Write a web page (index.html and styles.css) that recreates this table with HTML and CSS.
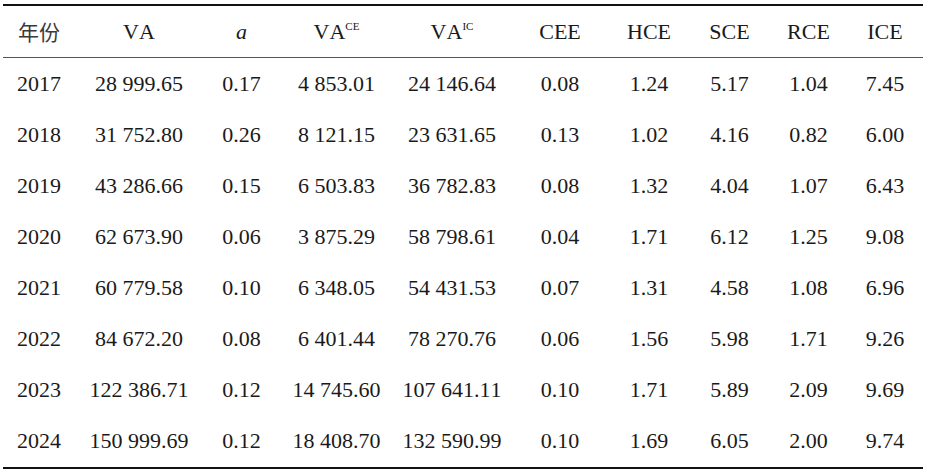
FILE: index.html
```html
<!DOCTYPE html>
<html lang="zh">
<head>
<meta charset="utf-8">
<title>表</title>
<link rel="stylesheet" href="styles.css">
</head>
<body>
<table class="data">
  <colgroup>
    <col class="c1"><col class="c2"><col class="c3"><col class="c4"><col class="c5">
    <col class="c6"><col class="c7"><col class="c8"><col class="c9"><col class="c10">
  </colgroup>
  <thead>
    <tr>
      <th class="cjk">年份</th>
      <th>VA</th>
      <th><i class="var">a</i></th>
      <th>VA<sup class="sup">CE</sup></th>
      <th>VA<sup class="sup">IC</sup></th>
      <th>CEE</th>
      <th>HCE</th>
      <th>SCE</th>
      <th>RCE</th>
      <th>ICE</th>
    </tr>
  </thead>
  <tbody>
    <tr><td>2017</td><td>28 999.65</td><td>0.17</td><td>4 853.01</td><td>24 146.64</td><td>0.08</td><td>1.24</td><td>5.17</td><td>1.04</td><td>7.45</td></tr>
    <tr><td>2018</td><td>31 752.80</td><td>0.26</td><td>8 121.15</td><td>23 631.65</td><td>0.13</td><td>1.02</td><td>4.16</td><td>0.82</td><td>6.00</td></tr>
    <tr><td>2019</td><td>43 286.66</td><td>0.15</td><td>6 503.83</td><td>36 782.83</td><td>0.08</td><td>1.32</td><td>4.04</td><td>1.07</td><td>6.43</td></tr>
    <tr><td>2020</td><td>62 673.90</td><td>0.06</td><td>3 875.29</td><td>58 798.61</td><td>0.04</td><td>1.71</td><td>6.12</td><td>1.25</td><td>9.08</td></tr>
    <tr><td>2021</td><td>60 779.58</td><td>0.10</td><td>6 348.05</td><td>54 431.53</td><td>0.07</td><td>1.31</td><td>4.58</td><td>1.08</td><td>6.96</td></tr>
    <tr><td>2022</td><td>84 672.20</td><td>0.08</td><td>6 401.44</td><td>78 270.76</td><td>0.06</td><td>1.56</td><td>5.98</td><td>1.71</td><td>9.26</td></tr>
    <tr><td>2023</td><td>122 386.71</td><td>0.12</td><td>14 745.60</td><td>107 641.11</td><td>0.10</td><td>1.71</td><td>5.89</td><td>2.09</td><td>9.69</td></tr>
    <tr><td>2024</td><td>150 999.69</td><td>0.12</td><td>18 408.70</td><td>132 590.99</td><td>0.10</td><td>1.69</td><td>6.05</td><td>2.00</td><td>9.74</td></tr>
  </tbody>
</table>
</body>
</html>
```
FILE: styles.css
```css
html, body {
  margin: 0;
  padding: 0;
  background: #ffffff;
}

body {
  padding: 4px 3px 0 3px;
  font-family: "Liberation Serif", "Noto Sans CJK SC", serif;
  font-size: 22px;
  color: #1a1a1a;
  font-kerning: none;
}

.data {
  width: 920px;
  table-layout: fixed;
  border-collapse: separate;
  border-spacing: 0;
  border-top: 2px solid #111111;
  border-bottom: 2px solid #111111;
}

.c1 { width: 72px; }
.c2 { width: 128px; }
.c3 { width: 77px; }
.c4 { width: 113px; }
.c5 { width: 118px; }
.c6 { width: 98px; }
.c7 { width: 80px; }
.c8 { width: 81px; }
.c9 { width: 77px; }
.c10 { width: 76px; }

.data th,
.data td {
  padding: 0;
  text-align: center;
  vertical-align: middle;
  font-weight: normal;
  white-space: nowrap;
  line-height: 1;
}

.data thead th {
  height: 51px;
  border-bottom: 1px solid #555555;
}

.data tbody td {
  height: 51.1px;
}

.cjk {
  font-family: "Noto Sans CJK SC", sans-serif;
  font-weight: 300;
  color: #3a3a3a;
  font-size: 21px;
}

.var {
  font-style: italic;
}

.sup {
  font-size: 11px;
  line-height: 0;
  vertical-align: 9px;
}
```
